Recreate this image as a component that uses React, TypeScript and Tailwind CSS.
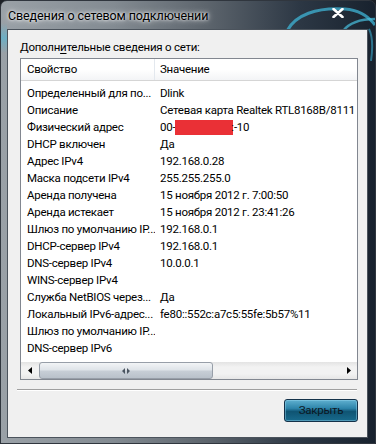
import React from "react";

type Row = { name: string; value: React.ReactNode };

const rows: Row[] = [
  { name: "Определенный для по...", value: "Dlink" },
  { name: "Описание", value: "Сетевая карта Realtek RTL8168B/8111 Family PCI-E Gigabit Ethernet NIC (NDIS 6.20)" },
  {
    name: "Физический адрес",
    value: (
      <span className="inline-flex items-center">
        00-
        <span className="inline-block w-[58px] h-[15px] bg-[#ea3036]" />
        <span className="-ml-[2px]">:-10</span>
      </span>
    ),
  },
  { name: "DHCP включен", value: "Да" },
  { name: "Адрес IPv4", value: "192.168.0.28" },
  { name: "Маска подсети IPv4", value: "255.255.255.0" },
  { name: "Аренда получена", value: "15 ноября 2012 г. 7:00:50" },
  { name: "Аренда истекает", value: "15 ноября 2012 г. 23:41:26" },
  { name: "Шлюз по умолчанию IP...", value: "192.168.0.1" },
  { name: "DHCP-сервер IPv4", value: "192.168.0.1" },
  { name: "DNS-сервер IPv4", value: "10.0.0.1" },
  { name: "WINS-сервер IPv4", value: "" },
  { name: "Служба NetBIOS через...", value: "Да" },
  { name: "Локальный IPv6-адрес...", value: "fe80::552c:a7c5:55fe:5b57%11" },
  { name: "Шлюз по умолчанию IP...", value: "" },
  { name: "DNS-сервер IPv6", value: "" },
];

function GlassSwirl() {
  // the cyan swirl of the desktop behind the glass frame
  return (
    <svg className="absolute top-0 right-0 pointer-events-none" width="110" height="60" viewBox="0 0 110 60">
      <path d="M22 30 C 30 14, 52 6, 80 8 C 94 9, 104 16, 110 24" stroke="#3fb4d6" strokeWidth="3" fill="none" opacity="0.75" />
      <path d="M78 30 C 84 22, 96 18, 110 18" stroke="#49c0e0" strokeWidth="2.5" fill="none" opacity="0.7" />
      <path d="M104 28 C 108 36, 108 46, 106 60" stroke="#3aa8cc" strokeWidth="2" fill="none" opacity="0.6" />
    </svg>
  );
}

export default function App() {
  return (
    <div className="w-[376px] h-[444px] bg-[#1c2026] overflow-hidden font-['Roboto',sans-serif] text-[11.5px] tracking-[-0.25px] text-black">
      <div className="relative w-[376px] h-[444px] rounded-t-[7px] border border-[#30363e] bg-[linear-gradient(90deg,#9aa1a7_0%,#838b92_30%,#5d656d_55%,#2c3744_80%,#18222e_100%)]">
        <GlassSwirl />
        <div className="absolute left-0 top-[22px] w-[6px] h-[30px] bg-[linear-gradient(180deg,transparent,#4fb8d8_50%,transparent)] opacity-60" />

        {/* title bar */}
        <div className="relative h-[28px] flex items-center pl-[7px] pt-[3px]">
          <span className="text-[12.5px] tracking-[-0.1px] text-black [text-shadow:0_0_6px_#ffffff,0_0_3px_#ffffff]">
            Сведения о сетевом подключении
          </span>
          <svg className="absolute right-[31px] top-[7px]" width="12" height="10" viewBox="0 0 12 10">
            <path d="M1.5 1 L10.5 9 M10.5 1 L1.5 9" stroke="#ffffff" strokeWidth="2.6" strokeLinecap="round" />
          </svg>
        </div>

        {/* client area */}
        <div className="relative ml-[6px] w-[361px] h-[409px] border border-[#4b535c] bg-[#f0f0f0] flex flex-col">
          <div className="pl-[12px] pt-[9px] leading-[16px]">
            Дополн<span className="underline underline-offset-2">и</span>тельные сведения о сети:
          </div>

          {/* list view */}
          <div className="ml-[12px] mt-[3px] w-[338px] h-[322px] border border-[#828790] bg-white flex flex-col overflow-hidden">
            <div className="h-[22px] flex bg-[linear-gradient(180deg,#ffffff_0%,#ffffff_50%,#f3f4f6_100%)] border-b border-[#d5d5d5]">
              <div className="w-[134px] pl-[6px] flex items-center border-r border-[#e3e8ee]">Свойство</div>
              <div className="flex-1 pl-[5px] flex items-center">Значение</div>
            </div>
            <div className="flex-1 pt-[4px] overflow-hidden">
              {rows.map((r, i) => (
                <div key={i} className="h-[17px] flex items-center whitespace-nowrap">
                  <div className="w-[134px] pl-[6px] shrink-0 overflow-hidden">{r.name}</div>
                  <div className="flex-1 min-w-0 pl-[5px] overflow-hidden">{r.value}</div>
                </div>
              ))}
            </div>

            {/* horizontal scrollbar */}
            <div className="h-[17px] flex bg-[linear-gradient(180deg,#e3e3e3,#f2f2f2_30%,#f2f2f2_70%,#e6e6e6)]">
              <div className="w-[17px] flex items-center justify-center">
                <svg width="4" height="7" viewBox="0 0 4 7">
                  <path d="M4 0 L0 3.5 L4 7 Z" fill="#000" />
                </svg>
              </div>
              <div className="ml-[1px] w-[174px] h-[17px] rounded-[3px] border border-[#979ea8] bg-[linear-gradient(180deg,#f2f4f6_0%,#dfe4e9_45%,#c7ced6_55%,#b9c1ca_100%)] flex items-center justify-center">
                <svg width="8" height="6" viewBox="0 0 8 6">
                  <path d="M3 0 L0 3 L3 6 Z M5 0 L8 3 L5 6 Z" fill="#4a5460" />
                </svg>
              </div>
              <div className="flex-1" />
              <div className="w-[17px] flex items-center justify-center">
                <svg width="4" height="7" viewBox="0 0 4 7">
                  <path d="M0 0 L4 3.5 L0 7 Z" fill="#000" />
                </svg>
              </div>
            </div>
          </div>

          {/* separator */}
          <div className="ml-[9px] mt-[9px] w-[340px] h-[2px] border-t border-[#a0a0a0] border-b border-b-white" />

          <div className="flex justify-end pr-[9px] mt-[8px]">
            <button className="w-[74px] h-[23px] rounded-[3px] border border-[#15324a] bg-[linear-gradient(180deg,#5fb0d0_0%,#2d84aa_40%,#0f5473_55%,#186a8c_100%)] text-[#0b1824] shadow-[inset_0_0_0_1px_rgba(150,215,240,0.45)]">
              Закрыть
            </button>
          </div>
        </div>
      </div>
    </div>
  );
}
